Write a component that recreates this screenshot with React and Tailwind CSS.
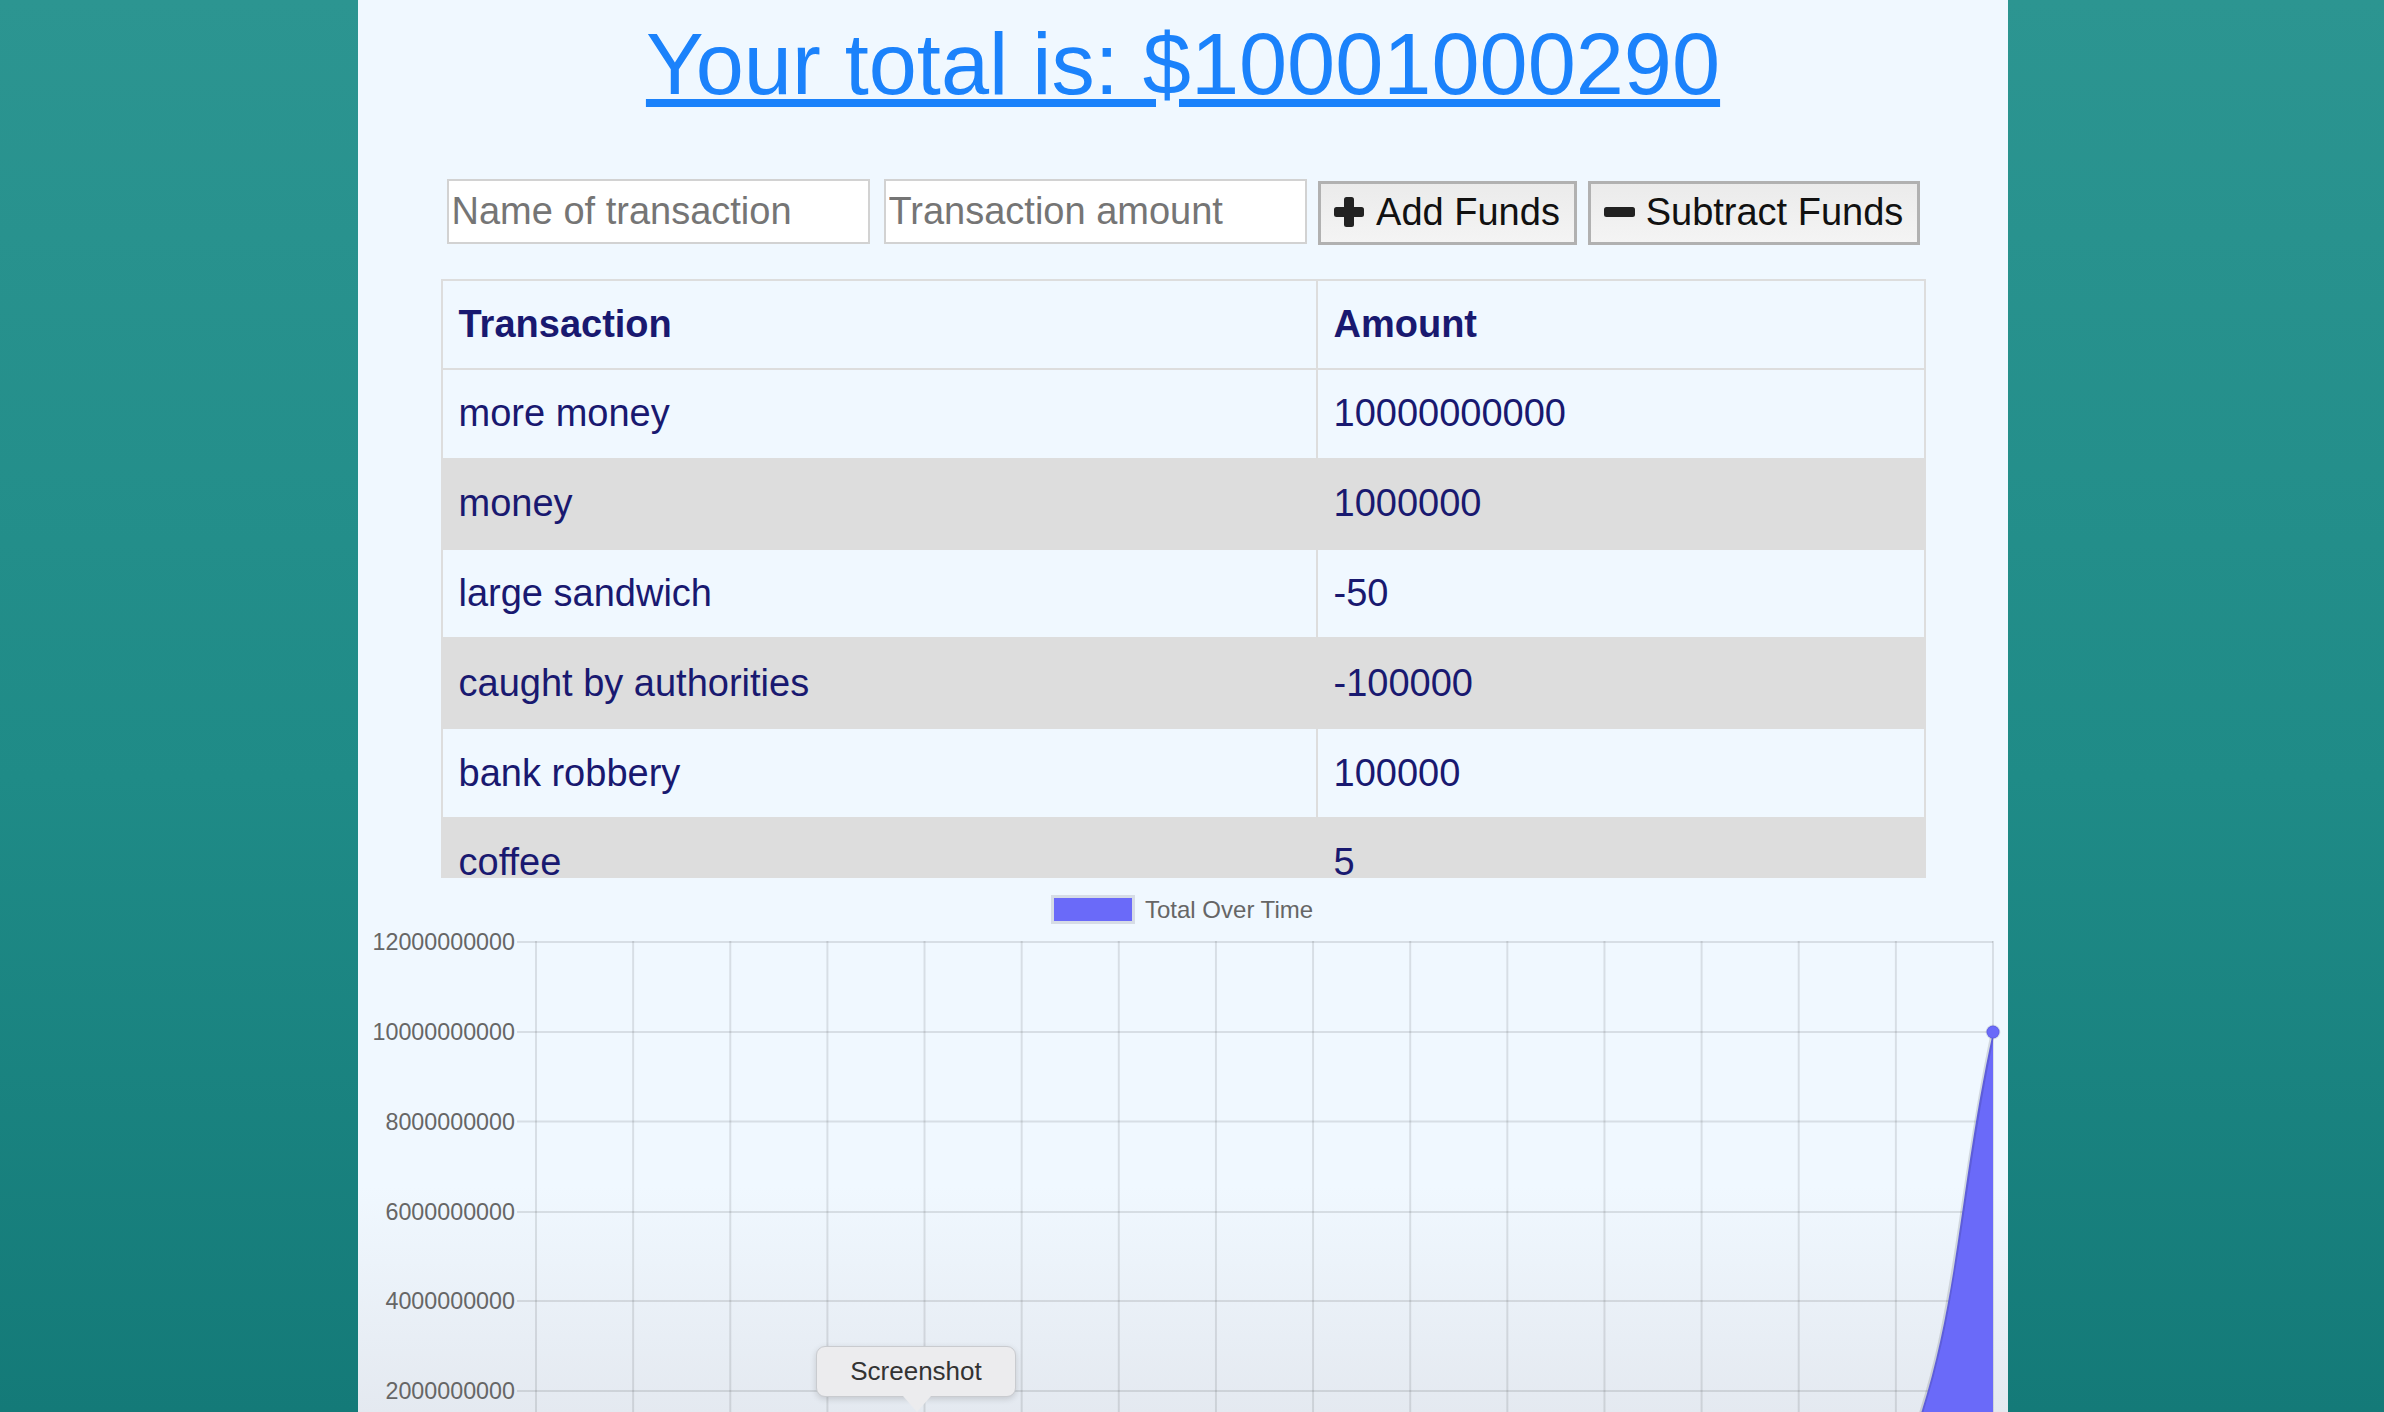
import React from "react";

const rows = [
  ["more money", "10000000000"],
  ["money", "1000000"],
  ["large sandwich", "-50"],
  ["caught by authorities", "-100000"],
  ["bank robbery", "100000"],
  ["coffee", "5"],
  ["lunch", "-15"],
];

const yLabels = [
  ["12000000000", 64],
  ["10000000000", 154],
  ["8000000000", 243.6],
  ["6000000000", 334],
  ["4000000000", 423],
  ["2000000000", 513],
];

const vx = Array.from({ length: 16 }, (_, i) => 178 + i * 97.133);

function Chart() {
  return (
    <svg width="1650" height="534" viewBox="0 0 1650 534" className="block">
      {/* legend */}
      <rect x="693" y="17" width="84" height="29" fill="#d6dce6" />
      <rect x="696" y="20" width="78" height="23" fill="#6a6af9" />
      <text x="787" y="40" fontSize="24" fill="#666" fontFamily="'Liberation Sans', Arial, sans-serif">
        Total Over Time
      </text>
      {/* horizontal grid */}
      {yLabels.map(([l, y]) => (
        <g key={l}>
          <line x1="159" x2="1635" y1={y} y2={y} stroke="rgba(0,0,0,0.1)" strokeWidth="2" />
          <text
            x="157"
            y={y}
            textAnchor="end"
            dominantBaseline="central"
            fontSize="23.3"
            fill="#666"
            fontFamily="'Liberation Sans', Arial, sans-serif"
          >
            {l}
          </text>
        </g>
      ))}
      {/* vertical grid */}
      {vx.map((x, i) => (
        <line key={i} x1={x} x2={x} y1="63" y2="534" stroke="rgba(0,0,0,0.1)" strokeWidth="2" />
      ))}
      {/* area */}
      <path
        d="M 1440.7 602.7 L 1537.8 602.7 C 1601.9 454.6 1596.1 333.5 1635 154 L 1635 602.7 Z"
        fill="#6a6af9"
      />
      <path
        d="M 1440.7 602.7 L 1537.8 602.7 C 1601.9 454.6 1596.1 333.5 1635 154"
        fill="none"
        stroke="rgba(0,0,0,0.12)"
        strokeWidth="4"
      />
      <circle cx="1635" cy="154" r="6.5" fill="#6a6af9" stroke="rgba(0,0,0,0.08)" strokeWidth="2" />
    </svg>
  );
}

export default function App() {
  const font = { fontFamily: "'Liberation Sans', Arial, Helvetica, sans-serif" };
  return (
    <div
      className="h-[1412px] w-[2384px] overflow-hidden bg-[linear-gradient(to_bottom,#2c9591,#1f8b87_55%,#147a78)]"
      style={font}
    >
      <div className="ml-[358px] w-[1650px] h-[1412px] flex flex-col items-center bg-[linear-gradient(to_bottom,#f0f8ff_0%,#f0f8ff_84%,#e4e9f0_100%)]">
        <h1 className="mt-[16px] text-[86.5px] leading-[96px] font-normal">
          <a href="#" className="text-[#1b82fb] underline">
            Your total is: $10001000290
          </a>
        </h1>

        <div className="mt-[67px] flex items-start">
          <input
            placeholder="Name of transaction"
            className="w-[423px] h-[65px] bg-white border-2 border-[#d2d2d2] pl-[3px] text-[38px] text-black placeholder:text-[#757575] outline-none"
          />
          <input
            placeholder="Transaction amount"
            className="ml-[14px] w-[423px] h-[65px] bg-white border-2 border-[#d2d2d2] pl-[3px] text-[38px] text-black placeholder:text-[#757575] outline-none"
          />
          <button className="ml-[11px] mt-[2px] w-[259px] h-[64px] border-[3px] border-[#b1b1b1] bg-[linear-gradient(to_bottom,#ebebeb,#f4f4f4)] flex items-center justify-center pb-[2px] text-[38px] text-[#111]">
            <svg width="30" height="30" viewBox="0 0 30 30" className="mr-[12px]">
              <rect x="10" y="0" width="10" height="30" rx="2.5" fill="#222" />
              <rect x="0" y="10" width="30" height="10" rx="2.5" fill="#222" />
            </svg>
            Add Funds
          </button>
          <button className="ml-[11px] mt-[2px] w-[332px] h-[64px] border-[3px] border-[#b1b1b1] bg-[linear-gradient(to_bottom,#ebebeb,#f4f4f4)] flex items-center justify-center pb-[2px] text-[38px] text-[#111]">
            <svg width="31" height="10" viewBox="0 0 31 10" className="mr-[11px]">
              <rect x="0" y="0" width="31" height="10" rx="2.5" fill="#222" />
            </svg>
            Subtract Funds
          </button>
        </div>

        <div className="mt-[34px] w-[1485px] h-[599px] overflow-hidden">
          <table className="w-[1485px] border-collapse border-2 border-[#dddddd] text-[38px] text-[#191970]">
            <thead>
              <tr className="h-[89px]">
                <th className="w-[875px] border-2 border-[#dddddd] pl-[16px] text-left font-bold">Transaction</th>
                <th className="border-2 border-[#dddddd] pl-[16px] text-left font-bold">Amount</th>
              </tr>
            </thead>
            <tbody>
              {rows.map(([n, a], i) => (
                <tr key={n} className={`h-[89.8px] ${i % 2 === 1 ? "bg-[#dddddd]" : ""}`}>
                  <td className="border-2 border-[#dddddd] pl-[16px]">{n}</td>
                  <td className="border-2 border-[#dddddd] pl-[16px]">{a}</td>
                </tr>
              ))}
            </tbody>
          </table>
        </div>

        <div className="relative w-[1650px] h-[534px]">
          <Chart />
          <div className="absolute left-[458px] top-[468px] w-[200px] h-[51px] rounded-[9px] border border-[#c9cbcf] bg-[#ececee] shadow-[0_2px_6px_rgba(0,0,0,0.15)] flex items-center justify-center text-[26px] text-[#333]">
            Screenshot
            <div className="absolute left-[86px] top-[49px] w-0 h-0 border-l-[14px] border-r-[14px] border-t-[16px] border-l-transparent border-r-transparent border-t-[#ececee]" />
          </div>
        </div>
      </div>
    </div>
  );
}
